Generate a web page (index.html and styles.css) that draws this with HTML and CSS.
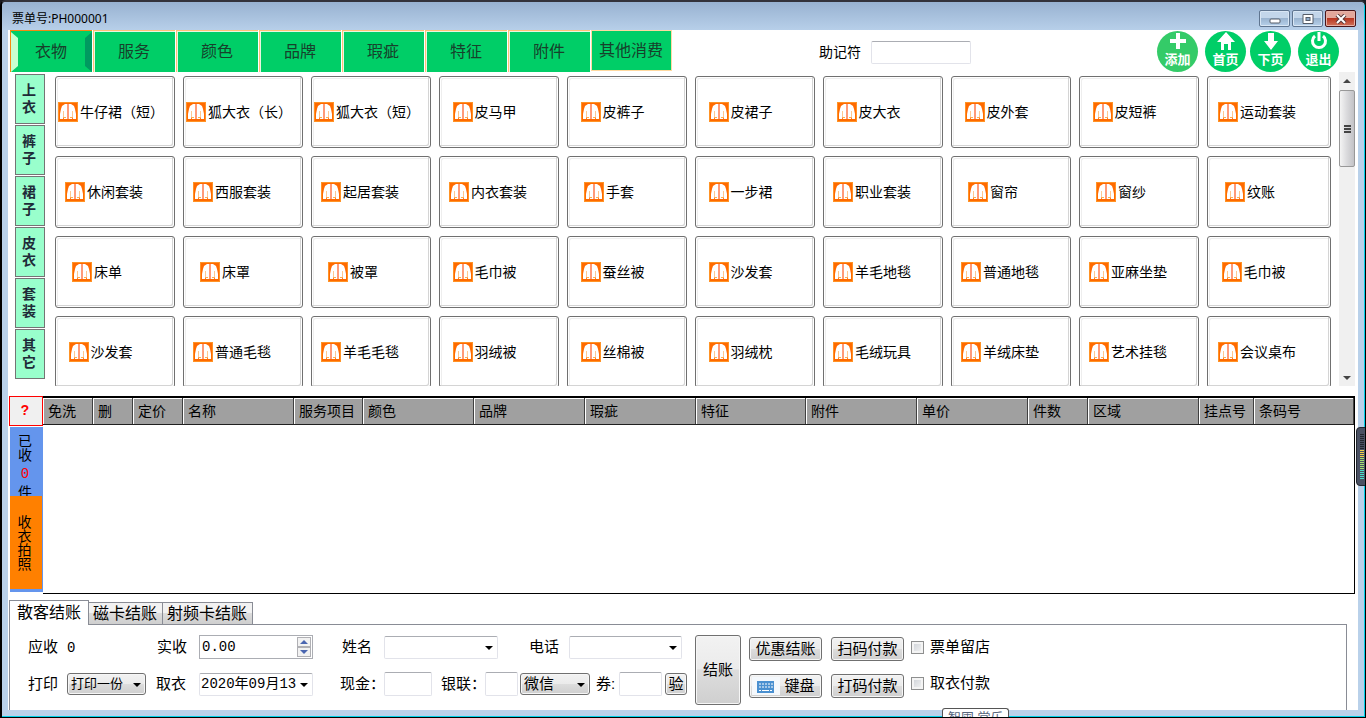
FILE: index.html
```html
<!DOCTYPE html>
<html lang="zh-CN">
<head>
<meta charset="utf-8">
<title>票单号:PH000001</title>
<link rel="stylesheet" href="styles.css">
</head>
<body>
<svg class="sprite" aria-hidden="true">
  <symbol id="coat" viewBox="0 0 20 20">
    <rect width="20" height="20" fill="#ff9326"/>
    <rect x="1" y="1" width="18" height="18" fill="#ff6a00"/>
    <path d="M9 2H7L4 4L3 7L2 12V17H5L6 13V17H9ZM11 2H13L16 4L17 7L18 12V17H15L14 13V17H11Z" fill="#fff"/>
    <path d="M9 2H11V17H9Z" fill="#ff9a78"/>
    <path d="M5.500 9V14M14.500 9V14" stroke="#ffc890" fill="none"/>
    <path d="M6 15.500H8M12 15.500H14" stroke="#ffb14a" fill="none"/>
  </symbol>
</svg>
<div class="window">
  <header class="titlebar">
    <h1 class="title">票单号:PH000001</h1>
    <div class="controls">
      <button class="ctl" aria-label="最小化"><svg width="12" height="12"><rect x="1" y="6" width="10" height="4" rx="1" fill="#fff" stroke="#545c68"/></svg></button>
      <button class="ctl" aria-label="最大化"><svg width="12" height="12"><path d="M1 1.500H11V10.500H1Z" fill="#fff" stroke="#545c68"/><rect x="4" y="4.500" width="4" height="3" fill="#8fadce" stroke="#545c68"/></svg></button>
      <button class="ctl close" aria-label="关闭"><svg width="12" height="10"><path d="M2 1L10 9M10 1L2 9" stroke="#5a3a3a" stroke-width="4"/><path d="M2 1L10 9M10 1L2 9" stroke="#fff" stroke-width="2"/></svg></button>
    </div>
  </header>
  <main class="client">
    <div class="toolbar">
      <nav class="tabs">
        <button class="tab active">衣物</button>
        <button class="tab">服务</button>
        <button class="tab">颜色</button>
        <button class="tab">品牌</button>
        <button class="tab">瑕疵</button>
        <button class="tab">特征</button>
        <button class="tab">附件</button>
        <button class="tab last">其他消费</button>
      </nav>
      <div class="search"><label for="memo">助记符</label><input id="memo" class="box memo" type="text"></div>
      <div class="actions">
        <button class="round add"><svg width="20" height="20"><path d="M10 2V18M2 10H18" stroke="#fff" stroke-width="4"/></svg><span>添加</span></button>
        <button class="round home"><svg width="20" height="20"><path d="M10 1L19 11H15V19H12V13H8V19H5V11H1Z" fill="#fff"/></svg><span>首页</span></button>
        <button class="round down"><svg width="20" height="20"><path d="M7 2H13V10H17L10 19L3 10H7Z" fill="#fff"/></svg><span>下页</span></button>
        <button class="round exit"><svg width="20" height="20"><path d="M6 5A6.500 6.500 0 1 0 14 5" stroke="#fff" stroke-width="3" fill="none"/><path d="M10 1V10" stroke="#fff" stroke-width="3"/></svg><span>退出</span></button>
      </div>
    </div>

    <section class="catalog">
      <nav class="kinds">
        <button class="kind">上衣</button>
        <button class="kind">裤子</button>
        <button class="kind">裙子</button>
        <button class="kind">皮衣</button>
        <button class="kind">套装</button>
        <button class="kind">其它</button>
      </nav>
      <div class="items">
        <button class="item"><svg><use href="#coat"/></svg>牛仔裙（短）</button>
        <button class="item"><svg><use href="#coat"/></svg>狐大衣（长）</button>
        <button class="item"><svg><use href="#coat"/></svg>狐大衣（短）</button>
        <button class="item"><svg><use href="#coat"/></svg>皮马甲</button>
        <button class="item"><svg><use href="#coat"/></svg>皮裤子</button>
        <button class="item"><svg><use href="#coat"/></svg>皮裙子</button>
        <button class="item"><svg><use href="#coat"/></svg>皮大衣</button>
        <button class="item"><svg><use href="#coat"/></svg>皮外套</button>
        <button class="item"><svg><use href="#coat"/></svg>皮短裤</button>
        <button class="item"><svg><use href="#coat"/></svg>运动套装</button>
        <button class="item"><svg><use href="#coat"/></svg>休闲套装</button>
        <button class="item"><svg><use href="#coat"/></svg>西服套装</button>
        <button class="item"><svg><use href="#coat"/></svg>起居套装</button>
        <button class="item"><svg><use href="#coat"/></svg>内衣套装</button>
        <button class="item"><svg><use href="#coat"/></svg>手套</button>
        <button class="item"><svg><use href="#coat"/></svg>一步裙</button>
        <button class="item"><svg><use href="#coat"/></svg>职业套装</button>
        <button class="item"><svg><use href="#coat"/></svg>窗帘</button>
        <button class="item"><svg><use href="#coat"/></svg>窗纱</button>
        <button class="item"><svg><use href="#coat"/></svg>纹账</button>
        <button class="item"><svg><use href="#coat"/></svg>床单</button>
        <button class="item"><svg><use href="#coat"/></svg>床罩</button>
        <button class="item"><svg><use href="#coat"/></svg>被罩</button>
        <button class="item"><svg><use href="#coat"/></svg>毛巾被</button>
        <button class="item"><svg><use href="#coat"/></svg>蚕丝被</button>
        <button class="item"><svg><use href="#coat"/></svg>沙发套</button>
        <button class="item"><svg><use href="#coat"/></svg>羊毛地毯</button>
        <button class="item"><svg><use href="#coat"/></svg>普通地毯</button>
        <button class="item"><svg><use href="#coat"/></svg>亚麻坐垫</button>
        <button class="item"><svg><use href="#coat"/></svg>毛巾被</button>
        <button class="item"><svg><use href="#coat"/></svg>沙发套</button>
        <button class="item"><svg><use href="#coat"/></svg>普通毛毯</button>
        <button class="item"><svg><use href="#coat"/></svg>羊毛毛毯</button>
        <button class="item"><svg><use href="#coat"/></svg>羽绒被</button>
        <button class="item"><svg><use href="#coat"/></svg>丝棉被</button>
        <button class="item"><svg><use href="#coat"/></svg>羽绒枕</button>
        <button class="item"><svg><use href="#coat"/></svg>毛绒玩具</button>
        <button class="item"><svg><use href="#coat"/></svg>羊绒床垫</button>
        <button class="item"><svg><use href="#coat"/></svg>艺术挂毯</button>
        <button class="item"><svg><use href="#coat"/></svg>会议桌布</button>
      </div>
      <div class="scrollbar">
        <svg width="16" height="18"><path d="M4 11L8 7L12 11Z" fill="#444"/></svg>
        <div class="thumb"><svg width="8" height="8"><path d="M1 1H8M1 4H8M1 7H8" stroke="#444" stroke-width="2"/></svg></div>
        <svg class="to-end" width="16" height="18"><path d="M4 8L8 12L12 8Z" fill="#444"/></svg>
      </div>
    </section>

    <section class="ledger">
      <div class="side">
        <button class="help">?</button>
        <div class="count"><span>已</span><span>收</span><b>0</b><span>件</span></div>
        <button class="photo">收衣拍照</button>
      </div>
      <div class="sheet">
        <table>
          <colgroup>
            <col class="w50"><col class="w40"><col class="w50"><col class="w111"><col class="w69"><col class="w111"><col class="w111"><col class="w111"><col class="w110"><col class="w111"><col class="w111"><col class="w60"><col class="w111"><col class="w55"><col>
          </colgroup>
          <thead><tr>
            <th>免洗</th><th>删</th><th>定价</th><th>名称</th><th>服务项目</th><th>颜色</th><th>品牌</th><th>瑕疵</th><th>特征</th><th>附件</th><th>单价</th><th>件数</th><th>区域</th><th>挂点号</th><th>条码号</th>
          </tr></thead>
        </table>
      </div>
    </section>

    <section class="checkout">
      <div class="pay-tabs">
        <button class="pay-tab on">散客结账</button>
        <button class="pay-tab">磁卡结账</button>
        <button class="pay-tab">射频卡结账</button>
      </div>
      <div class="pay-panel">
        <div class="fields">
          <div class="row">
            <span class="c1">应收</span><output class="due">0</output>
            <label class="c2" for="paid">实收</label>
            <span class="spin"><input id="paid" type="text" value="0.00"><span class="steps"><button aria-label="增加"><svg width="8" height="4"><path d="M0 4L4 0L8 4Z" fill="#4a66b0"/></svg></button><button aria-label="减少"><svg width="8" height="4"><path d="M0 0L4 4L8 0Z" fill="#4a66b0"/></svg></button></span></span>
            <label class="c3" for="name">姓名</label>
            <span class="drop name"><select id="name"><option></option></select></span>
            <label class="c4" for="phone">电话</label>
            <span class="drop phone"><select id="phone"><option></option></select></span>
          </div>
          <div class="row">
            <label class="c1" for="print">打印</label>
            <span class="drop gray print"><select id="print"><option>打印一份</option></select></span>
            <label class="c5" for="date">取衣</label>
            <span class="drop date"><select id="date"><option>2020年09月13</option></select></span>
            <label class="c6" for="cash">现金：</label><input id="cash" class="box cash" type="text">
            <label class="c7" for="union">银联：</label><input id="union" class="box union" type="text">
            <span class="drop gray wechat"><select aria-label="支付方式"><option>微信</option></select></span>
            <label class="c8" for="coupon">券:</label><input id="coupon" class="box coupon" type="text">
            <button class="btn verify">验</button>
          </div>
        </div>
        <button class="btn settle">结账</button>
        <div class="buttons">
          <button class="btn">优惠结账</button>
          <button class="btn">扫码付款</button>
          <button class="btn keys"><svg width="28" height="18"><rect width="28" height="18" fill="#f4f8fc"/><rect x="5" y="4" width="17" height="12" fill="#4a90d0"/><path d="M7 7H21M7 10H21" stroke="#fff" stroke-dasharray="2 1"/><path d="M7 13.500H9M10 13.500H17M18 13.500H20" stroke="#fff"/></svg>键盘</button>
          <button class="btn">打码付款</button>
        </div>
        <div class="checks">
          <label><input type="checkbox">票单留店</label>
          <label><input type="checkbox">取衣付款</label>
        </div>
      </div>
    </section>
  </main>
  <div class="gauge"><svg width="4" height="46"><path d="M2 0V16" stroke="#22262e" stroke-width="4" stroke-dasharray="1 1"/><path d="M2 16V24" stroke="#f0d048" stroke-width="4" stroke-dasharray="1 1"/><path d="M2 24V36" stroke="#a4e070" stroke-width="4" stroke-dasharray="1 1"/><path d="M2 36V46" stroke="#48e0c8" stroke-width="4" stroke-dasharray="1 1"/></svg></div>
  <div class="popup">智囤 堂乐</div>
</div>
</body>
</html>
```
FILE: styles.css
```css
* { box-sizing: border-box; }
body {
  margin: 0;
  background: #1b1b22;
  font: 14px/20px "Liberation Sans", "Noto Sans CJK SC", sans-serif;
  color: #000;
}
button, input, select { font: inherit; color: inherit; margin: 0; padding: 0; border-radius: 0; }
button { white-space: nowrap; }
.sprite { position: absolute; width: 0; height: 0; }

.window {
  position: relative;
  height: 100vh;
  display: flex;
  flex-direction: column;
  padding: 0 7px 7px 6px;
  overflow: hidden;
  background: #b9d1ea;
  border: 1px solid #000;
  border-top: 2px solid #33333b;
  border-left-width: 2px;
  border-radius: 6px 6px 0 0;
  box-shadow: inset -1px -1px #00d0e8;
}
.titlebar {
  flex: none;
  height: 28px;
  display: flex;
  justify-content: space-between;
  margin: 0 -6px;
  padding: 0 8px 0 10px;
  background: linear-gradient(#98b2d1, #b7cfe9);
}
.title { margin: 7px 0 0; font: 12px/20px "Noto Sans", "Noto Sans CJK SC", sans-serif; }
.controls { display: flex; gap: 2px; padding-top: 8px; }
.ctl {
  width: 31px;
  height: 17px;
  display: flex;
  align-items: center;
  justify-content: center;
  border: 1px solid #5f7590;
  border-radius: 2px;
  background: linear-gradient(#c3d6ea 45%, #9ab4d0 50%, #b6d0ea);
  box-shadow: inset 0 0 0 1px #d8e6f4;
}
.ctl.close { border-color: #4a1519; background: linear-gradient(#e3a79b 45%, #b93621 50%, #d0735c); box-shadow: inset 0 0 0 1px #e6b0a6; }

.client { flex: 1; min-height: 0; display: flex; flex-direction: column; background: #fff; }

.toolbar { flex: none; height: 42px; display: flex; padding-left: 2px; }
.tabs { display: flex; gap: 1px; }
.tab {
  width: 82px;
  height: 42px;
  padding: 1px 1px 0 0;
  border: 1px solid #ffc078;
  border-width: 1px 0 0 1px;
  background: #00ce67;
  box-shadow: inset 1px 1px #e8f6e0;
  color: #17402b;
  font-size: 16px;
}
.tab.active {
  position: relative;
  border-color: #f58a10;
  box-shadow: none;
}
.tab.active::before, .tab.active::after {
  content: "";
  position: absolute;
  top: 1px;
  bottom: 0;
  width: 7px;
}
.tab.active::before { left: 0; background: #c8ffd0; clip-path: polygon(0 0, 100% 15%, 100% 85%, 0 100%); }
.tab.active::after { right: 0; background: #009a60; clip-path: polygon(100% 0, 0 15%, 0 85%, 100% 100%); }
.tab.last { width: 81px; height: 41px; border: 1px solid #ffd9a0; box-shadow: none; }
.search { display: flex; align-items: center; gap: 10px; margin-left: 147px; padding-top: 2px; }
.box { background: #fff; border: 1px solid #e2e3ea; border-top-color: #abadb3; border-radius: 2px; outline: 0; }
.memo { width: 100px; height: 23px; }
.actions { display: flex; margin-left: auto; padding: 1px 19px 0 0; }
.round {
  width: 41px;
  height: 41px;
  display: flex;
  flex-direction: column;
  align-items: center;
  border: 0;
  border-radius: 50%;
  background: #00ce67;
  color: #fff;
  font-size: 13px;
  font-weight: 700;
  line-height: 17px;
}
.round svg { flex: none; height: 20px; }
.round.add { background: #34cb68; margin-right: 7px; }
.round.home { margin-right: 4px; }
.round.down { margin-right: 7px; }

.catalog { flex: none; height: 314px; display: flex; overflow: hidden; padding: 0 3px 0 7px; }
.kinds { flex: none; width: 30px; display: flex; flex-direction: column; gap: 1px; padding-top: 2px; }
.kind {
  height: 50px;
  padding: 0 8px 0 6px;
  border: 1px solid #747474;
  background: #99ffcc;
  color: #1e2b38;
  font-size: 14px;
  font-weight: 700;
  line-height: 17px;
  white-space: normal;
}
.items {
  flex: 1;
  display: grid;
  grid-template-columns: repeat(9, 120fr) 124fr;
  grid-auto-rows: 72px;
  gap: 8px;
  padding: 4px 8px 0 10px;
}
.item {
  display: flex;
  align-items: center;
  padding-right: 4px;
  border: 1px solid #707070;
  border-radius: 3px;
  background: #fff;
  box-shadow: inset -1px -1px #fff, inset -2px -2px #d4d4d4, inset 1px 1px #fff, inset 2px 2px #eee;
  font-size: 14px;
}
.item::before { content: ""; flex: 1; }
.item::after { content: ""; flex: 3; }
.item svg { flex: none; width: 20px; height: 20px; margin-right: 2px; }
.scrollbar { flex: none; width: 16px; display: flex; flex-direction: column; background: #f0f0f0; }
.scrollbar svg { display: block; }
.thumb {
  height: 77px;
  display: grid;
  place-content: center;
  border: 1px solid #989898;
  border-radius: 2px;
  background: linear-gradient(90deg, #f4f4f4, #dcdcde 45%, #c2c2c6);
}
.to-end { margin-top: auto; }

.ledger { flex: 1; min-height: 0; display: flex; margin-top: 10px; padding: 0 3px 0 1px; }
.side { flex: none; width: 34px; display: flex; flex-direction: column; padding-bottom: 2px; }
.help { height: 30px; padding-right: 2px; border: 1px solid #f00; background: #f0f0f0; color: #f00; font: 700 14px/20px "Liberation Mono", monospace; }
.count {
  height: 69px;
  display: flex;
  flex-direction: column;
  align-items: center;
  overflow: hidden;
  margin: 1px 0 0 1px;
  padding: 7px 3px 0 0;
  background: #6495ed;
  line-height: 14px;
}
.count span { flex: none; height: 14px; }
.count b { flex: none; margin: 5px 0 4px; color: #f00; font: 14px/14px "Liberation Mono", monospace; }
.photo {
  flex: 1;
  margin-left: 1px;
  padding: 0 10px 0 7px;
  border: solid #6495ed;
  border-width: 0 1px 3px 0;
  background: #ff8000;
  line-height: 14px;
  white-space: normal;
}
.sheet { flex: 1; border: 1px solid #000; border-top-width: 2px; border-left-width: 0; }
.sheet table { width: 100%; table-layout: fixed; border-collapse: separate; border-spacing: 0; border-bottom: 1px solid #202020; }
.sheet th {
  height: 26px;
  padding: 0 0 0 5px;
  overflow: hidden;
  border-right: 1px solid #404040;
  background: #a0a0a0;
  box-shadow: inset 1px 1px #fff;
  font-weight: 400;
  text-align: left;
  white-space: nowrap;
}
.w40 { width: 40px; }
.w50 { width: 50px; }
.w55 { width: 55px; }
.w60 { width: 60px; }
.w69 { width: 69px; }
.w110 { width: 110px; }
.w111 { width: 111px; }

.checkout { flex: none; margin-top: 6px; padding: 0 11px 0 1px; }
.pay-tabs { display: flex; align-items: flex-end; height: 24px; }
.pay-tab {
  height: 22px;
  padding: 0 5px 0 4px;
  border: 1px solid #898c95;
  border-width: 1px 1px 0;
  background: linear-gradient(#f2f2f2 45%, #dcdcdc 50%, #cfcfcf);
  font-size: 16px;
  line-height: 20px;
}
.pay-tab + .pay-tab { border-left-width: 0; }
.pay-tab.on { position: relative; height: 25px; margin-bottom: -1px; padding: 0 7px; background: #fff; }
.pay-panel {
  display: flex;
  height: 86px;
  padding: 10px 0 0 18px;
  border: 1px solid #898c95;
  border-bottom: 0;
  font-size: 15px;
}
.fields { flex: none; width: 667px; display: flex; flex-direction: column; gap: 13px; }
.row { display: flex; align-items: center; height: 24px; }
.row > * { flex: none; }
.c1 { width: 39px; }
.due { width: 90px; padding: 2px 0 0 0; font: 14px/20px "Liberation Mono", monospace; }
.c2 { width: 42px; }
.c3 { width: 42px; margin-left: 29px; }
.c4 { width: 40px; margin-left: 31px; }
.c5 { width: 43px; margin-left: 10px; }
.c6 { width: 44px; margin-left: 27px; }
.c7 { width: 44px; margin-left: 9px; }
.c8 { width: 23px; margin-left: 6px; }
label { white-space: nowrap; }
.spin { display: flex; width: 114px; height: 24px; padding: 1px; border: 1px solid #abadb3; }
.spin input { flex: 1; min-width: 0; padding: 0 0 0 1px; border: 0; outline: 0; font: 14px/18px "Liberation Mono", monospace; }
.steps { width: 14px; display: flex; flex-direction: column; }
.steps button { flex: 1; display: grid; place-content: center; border: 1px solid #b0b0b4; background: #f2f2f2; }
.drop { position: relative; height: 23px; }
.drop::after {
  content: "";
  position: absolute;
  top: 10px;
  right: 5px;
  border: 4px solid transparent;
  border-top-color: #000;
  border-bottom: 0;
  pointer-events: none;
}
.drop select {
  appearance: none;
  width: 100%;
  height: 100%;
  padding: 0 0 0 3px;
  border: 1px solid #e2e3ea;
  border-top-color: #abadb3;
  border-radius: 2px;
  background: #fff;
}
.drop.gray { height: 22px; }
.drop.gray select, .btn {
  border: 1px solid #707070;
  border-radius: 3px;
  background: linear-gradient(#f2f2f2, #ebebeb 48%, #dddddd 50%, #cfcfcf);
  box-shadow: inset 0 0 0 1px #f6f6f6;
}
.name { width: 114px; }
.phone { width: 113px; }
.print { width: 79px; font-size: 13px; }
.date { width: 114px; }
.date select { font: 14px/20px "Liberation Mono", "Noto Sans CJK SC", monospace; padding-left: 1px; }
.wechat { width: 70px; margin-left: 2px; }
.cash { width: 48px; height: 24px; }
.union { width: 33px; height: 24px; }
.coupon { width: 43px; height: 24px; }
.verify { width: 22px; height: 22px; margin-left: 3px; line-height: 18px; }
.settle { flex: none; width: 46px; height: 70px; }
.buttons { flex: none; display: grid; grid-template-columns: 73px 73px; grid-template-rows: 24px 24px; gap: 13px 9px; padding: 2px 0 0 8px; }
.keys { display: flex; align-items: center; justify-content: center; gap: 4px; padding-right: 4px; }
.checks { display: flex; flex-direction: column; gap: 16px; padding: 2px 0 0 7px; }
.checks label { display: flex; align-items: center; gap: 6px; }
.checks input {
  appearance: none;
  width: 13px;
  height: 13px;
  border: 1px solid #8e8f8f;
  background: linear-gradient(135deg, #cbcfd5, #f6f6f6);
  box-shadow: inset 0 0 0 2px #f4f4f4;
}

.gauge {
  position: absolute;
  right: -1px;
  top: 425px;
  width: 10px;
  height: 59px;
  padding: 6px 1px 0 3px;
  border: 1px solid #22262e;
  border-radius: 4px 0 0 4px;
  background: #4a5163;
}
.gauge svg { display: block; }
.popup {
  position: absolute;
  left: 940px;
  bottom: -1px;
  width: 67px;
  height: 10px;
  overflow: hidden;
  padding-left: 5px;
  border: 1px solid #555;
  border-bottom: 0;
  border-radius: 3px 3px 0 0;
  background: #fff;
  color: #56657c;
  font-size: 13px;
  line-height: 18px;
  white-space: nowrap;
}
```
